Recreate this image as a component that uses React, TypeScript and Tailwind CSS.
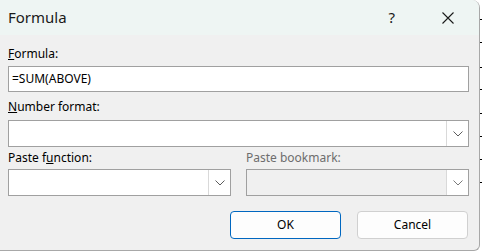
import * as React from "react";

const font = { fontFamily: '"Segoe UI", "Noto Sans", "Liberation Sans", sans-serif' };

const Chevron = ({ disabled }: { disabled?: boolean }) => (
  <svg width="10" height="6" viewBox="0 0 10 6" fill="none">
    <path
      d="M0.5 0.5 L5 5 L9.5 0.5"
      stroke={disabled ? "#7a7a7a" : "#5c5c5c"}
      strokeWidth="1"
    />
  </svg>
);

const Select = ({ disabled, className }: { disabled?: boolean; className?: string }) => (
  <div
    className={`flex h-[27px] border border-[#a0a0a0] ${
      disabled ? "bg-[#f0f0f0]" : "bg-white"
    } ${className ?? ""}`}
  >
    <div className="flex-1" />
    <div className="flex w-[22px] items-center justify-center border-l border-[#d9d9d9] bg-white">
      <Chevron disabled={disabled} />
    </div>
  </div>
);

const Label = ({ children, muted }: { children: React.ReactNode; muted?: boolean }) => (
  <div className={`text-[12px] leading-[16px] ${muted ? "text-[#6d6d6d]" : "text-black"}`}>
    {children}
  </div>
);

const ticks = [19, 42, 67, 89, 113, 136, 159, 182];

export default function App() {
  return (
    <div className="flex h-[251px] w-[482px] overflow-hidden bg-white" style={font}>
      <div className="flex h-[251px] w-[480px] flex-col overflow-hidden rounded-tr-[8px] rounded-br-[6px] border-r border-b border-[#a8a8a8] bg-[#f0f0f0]">
        <div className="flex h-[35px] items-center bg-[#eef5f3] pl-2">
          <span className="text-[15px] text-[#1a1a1a]">Formula</span>
          <span className="ml-auto mr-[47px] text-[15px] text-[#1a1a1a]">?</span>
          <svg className="mr-[25px]" width="12" height="12" viewBox="0 0 12 12">
            <path d="M0.5 0.5 L11.5 11.5 M11.5 0.5 L0.5 11.5" stroke="#1a1a1a" strokeWidth="1.1" />
          </svg>
        </div>

        <div className="flex flex-col px-2 pr-[10px] pt-[11px]">
          <Label>
            <span className="underline">F</span>ormula:
          </Label>
          <div className="mt-[4px] flex h-[26px] items-center border border-[#a0a0a0] bg-white pl-[3px] text-[12px]">
            =SUM(ABOVE)
          </div>

          <div className="mt-[7px]">
            <Label>
              <span className="underline">N</span>umber format:
            </Label>
          </div>
          <Select className="mt-[5px]" />

          <div className="mt-[3px] grid grid-cols-2 gap-[15px]">
            <div className="flex flex-col">
              <Label>
                Paste f<span className="underline">u</span>nction:
              </Label>
              <Select className="mt-[3px]" />
            </div>
            <div className="flex flex-col">
              <Label muted>Paste bookmark:</Label>
              <Select className="mt-[3px]" disabled />
            </div>
          </div>

          <div className="mt-[15px] flex justify-end gap-[16px] pr-[1px]">
            <button className="h-[28px] w-[111px] rounded-[4px] border-[1.5px] border-[#0067c0] bg-[#fdfdfd] text-[12px] text-black">
              OK
            </button>
            <button className="h-[28px] w-[111px] rounded-[4px] border border-[#d0d0d0] bg-[#fdfdfd] text-[12px] text-black">
              Cancel
            </button>
          </div>
        </div>
      </div>
      <div className="flex w-[2px] flex-col">
        {ticks.map((t, i) => (
          <div
            key={t}
            className="h-px w-[2px] bg-black"
            style={{ marginTop: i === 0 ? t : t - ticks[i - 1] - 1 }}
          />
        ))}
      </div>
    </div>
  );
}
